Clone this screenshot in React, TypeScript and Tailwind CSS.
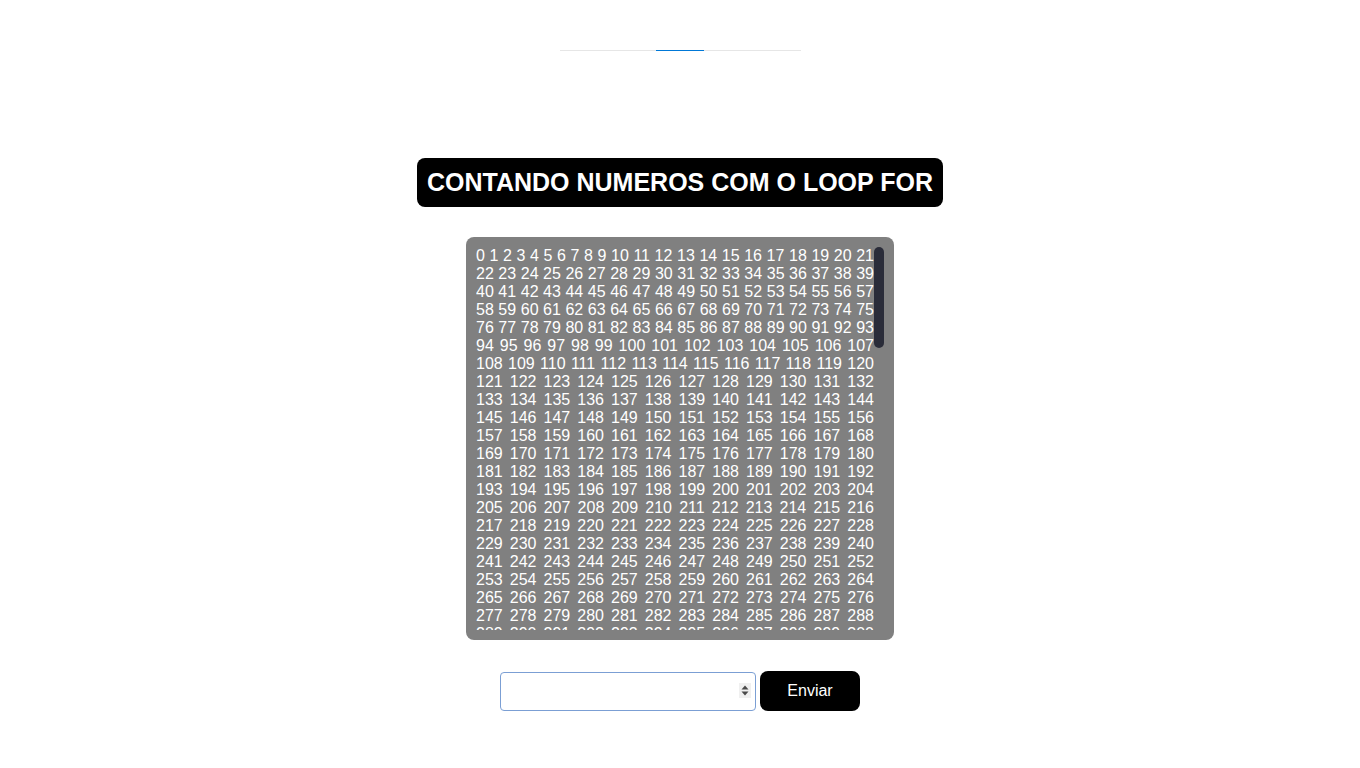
import React from "react";

export default function App() {
  const nums = Array.from({ length: 1000 }, (_, i) => i).join(" ");
  return (
    <div
      className="min-h-[768px] w-full bg-white flex flex-col items-center"
      style={{ fontFamily: '"Liberation Sans", Arial, sans-serif' }}
    >
      <div className="mt-[50px] flex w-[241px] h-px">
        <div className="w-[96px] h-px bg-[#e6e6e6]" />
        <div className="w-[48px] h-px bg-[#0078d7]" />
        <div className="flex-1 h-px bg-[#e6e6e6]" />
      </div>

      <h1 className="mt-[107px] h-[49px] px-[10px] flex items-center bg-black text-white rounded-[8px] text-[25px] font-bold leading-none">
        CONTANDO NUMEROS COM O LOOP FOR
      </h1>

      <div className="mt-[30px] w-[428px] h-[403px] bg-[#808080] rounded-[8px] p-[10px]">
        <div className="h-[383px] flex">
          <div className="flex-1 overflow-hidden text-white text-[16px] leading-[18px] text-justify">
            {nums}
          </div>
          <div className="w-[10px] h-full">
            <div className="w-[10px] h-[101px] rounded-[5px] bg-[#2a2c39]" />
          </div>
        </div>
      </div>

      <div className="mt-[31px] flex items-end gap-[4px]">
        <div className="relative">
          <input
            type="number"
            className="block w-[256px] h-[39px] border border-[#7b9fd4] rounded-[4px] pl-2 pr-[24px] text-[16px] outline-none bg-white [appearance:textfield] [&::-webkit-inner-spin-button]:appearance-none [&::-webkit-outer-spin-button]:appearance-none"
          />
          <span className="absolute right-[5px] top-[11px] w-[12px] h-[15px] bg-[#f0f0f0] flex items-center justify-center pointer-events-none">
            <svg width="12" height="15" viewBox="0 0 12 15">
              <polygon points="2.5,6.5 6,2.5 9.5,6.5" fill="#4a4a4a" />
              <polygon points="2.5,8.5 6,12.5 9.5,8.5" fill="#4a4a4a" />
            </svg>
          </span>
        </div>
        <button className="w-[100px] h-[40px] bg-black text-white rounded-[8px] text-[16px]">
          Enviar
        </button>
      </div>
    </div>
  );
}
